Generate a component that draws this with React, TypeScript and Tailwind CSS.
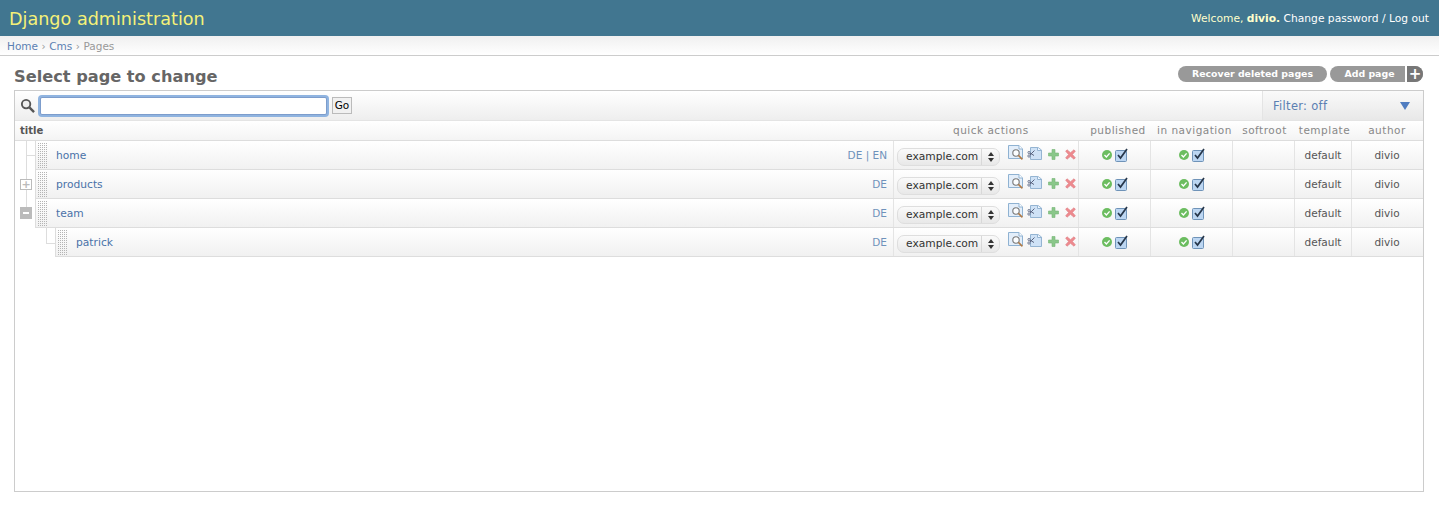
import React from "react";

const font = { fontFamily: '"DejaVu Sans", sans-serif' };

function Preview() {
  return (
    <svg width="16" height="15" viewBox="0 0 16 15" className="mb-[5px] shrink-0">
      <path d="M.5.5h10.500l3.500 3.500v9.500H.5z" fill="#e3eefa" stroke="#8fb2d2" />
      <path d="M11 .5v3.500h3.500" fill="#fff" stroke="#8fb2d2" />
      <circle cx="8" cy="8" r="3.200" fill="#fbfdff" stroke="#777777" strokeWidth="1.100" />
      <path d="M10.400 10.400l4 4" stroke="#b07a45" strokeWidth="1.500" />
    </svg>
  );
}
function Copy() {
  return (
    <svg width="15" height="13" viewBox="0 0 15 13" className="mb-[4px] shrink-0">
      <path d="M3.500.5h7.500l3.500 2.500v9.500h-11z" fill="#cfe2f6" stroke="#94b4d2" />
      <path d="M10.500.5v3h3.500" fill="#f4f9ff" stroke="#94b4d2" />
      <path d="M7.500 3.500L3 8M7 8.500L3 6" stroke="#5a6480" strokeWidth="1" fill="none" />
      <circle cx="2" cy="9" r="1.200" fill="#eef3fa" stroke="#5a6480" strokeWidth=".8" />
      <circle cx="2" cy="5.500" r="1.100" fill="#eef3fa" stroke="#5a6480" strokeWidth=".8" />
    </svg>
  );
}
function Plus() {
  return (
    <svg width="11" height="11" viewBox="0 0 11 11" className="mb-[1px] shrink-0">
      <path d="M4 .5h3v3.500h3.500v3H7v3.500H4V7H.5V4H4z" fill="#8ac78a" stroke="#76b576" strokeWidth=".6" />
    </svg>
  );
}
function Cross() {
  return (
    <svg width="11" height="11" viewBox="0 0 11 11" className="mb-[1px] shrink-0">
      <path d="M2 .8l3.500 2.900L9 .8l1.300 1.400L7.400 5.500l2.900 3.300L9 10.200 5.500 7.300 2 10.200.7 8.800l2.900-3.300L.7 2.200z" fill="#ee8a8e" stroke="#e08086" strokeWidth=".7" />
    </svg>
  );
}
function Status() {
  return (
    <div className="flex items-center gap-[3px] pl-[2px]">
      <svg width="10" height="10" viewBox="0 0 10 10">
        <circle cx="5" cy="5" r="5" fill="#6cbd60" />
        <path d="M2.500 5l1.900 1.900L7.600 3.400" fill="none" stroke="#fff" strokeWidth="1.400" />
      </svg>
      <svg width="14" height="14" viewBox="0 0 14 14">
        <rect x=".5" y="2.500" width="11" height="11" rx="1" fill="#bcd6f2" stroke="#6f93b8" />
        <path d="M3 7l2.500 3L12 1" fill="none" stroke="#26364a" strokeWidth="1.700" />
      </svg>
    </div>
  );
}
function Grip() {
  return (
    <div className="h-[25px] w-[10px] shrink-0 bg-[conic-gradient(#b4b4b4_25%,transparent_0)] bg-[length:2px_2px]" />
  );
}

const cols = [
  { w: "w-[72px]" },
  { w: "w-[82px]" },
  { w: "w-[62px]" },
  { w: "w-[57px]" },
  { w: "w-[72px]" },
];

const rows = [
  { name: "home", langs: "DE | EN", ml: "ml-[20px]" },
  { name: "products", langs: "DE", ml: "ml-[20px]" },
  { name: "team", langs: "DE", ml: "ml-[20px]" },
  { name: "patrick", langs: "DE", ml: "ml-[40px]" },
];

function Row({ r }: { r: (typeof rows)[number] }) {
  const nameW = r.name === "patrick" ? "w-[838px]" : "w-[858px]";
  return (
    <div className={`${r.ml} flex h-[29px] border-b border-l border-[#dddddd] bg-gradient-to-b from-white to-[#f1f1f1]`}>
      <div className={`${nameW} flex shrink-0 items-center border-r border-[#e4e4e4] pl-[1px] pr-[6px]`}>
        <Grip />
        <a className="ml-[9px] mt-[2px] text-[10.700px] text-[#4a72a8]">{r.name}</a>
        <span className="ml-auto mt-[2px] text-[10.500px] text-[#6f92bb]">{r.langs}</span>
      </div>
      <div className="flex w-[185px] shrink-0 items-center border-r border-[#e4e4e4] pl-[3px]">
        <div className="mt-[3px] flex h-[18px] w-[103px] shrink-0 items-center rounded-[7px] border border-[#dedede] bg-gradient-to-b from-[#fafafa] to-[#e8e8e8] pl-[8px] text-[10.700px] text-[#333333]">
          <span className="flex-1 pt-[1px]">example.com</span>
          <span className="flex h-full w-[18px] flex-col items-center justify-center gap-[2px] border-l border-[#d8d8d8]">
            <span className="h-0 w-0 border-x-[3px] border-b-[4px] border-x-transparent border-b-[#333333]" />
            <span className="h-0 w-0 border-x-[3px] border-t-[4px] border-x-transparent border-t-[#333333]" />
          </span>
        </div>
        <div className="ml-[8px] flex items-center">
          <Preview />
          <span className="ml-[3px] flex"><Copy /></span>
          <span className="ml-[6px] flex"><Plus /></span>
          <span className="ml-[6px] flex"><Cross /></span>
        </div>
      </div>
      <div className={`${cols[0].w} flex shrink-0 items-center justify-center border-r border-[#e4e4e4]`}><Status /></div>
      <div className={`${cols[1].w} flex shrink-0 items-center justify-center border-r border-[#e4e4e4]`}><Status /></div>
      <div className={`${cols[2].w} shrink-0 border-r border-[#e4e4e4]`} />
      <div className={`${cols[3].w} flex shrink-0 items-center justify-center border-r border-[#e4e4e4] pt-[2px] text-[10.500px] text-[#555555]`}>default</div>
      <div className={`${cols[4].w} flex shrink-0 items-center justify-center pr-[2px] pt-[2px] text-[10.500px] text-[#555555]`}>divio</div>
    </div>
  );
}

export default function App() {
  return (
    <div className="h-[516px] overflow-hidden bg-white" style={font}>
      <header className="flex h-[36px] items-center justify-between bg-[#417690] pl-[9px] pr-[10px] pt-[2px]">
        <h1 className="text-[17.600px] text-[#f5f178]">Django administration</h1>
        <div className="text-[10.700px] text-[#ffffcc]">
          Welcome, <b className="font-semibold">divio.</b> <span className="text-white">Change password / Log out</span>
        </div>
      </header>
      <nav className="flex h-[20px] items-center border-b border-[#cccccc] bg-gradient-to-b from-[#f0f0f0] to-white pl-[7px] pt-[2px] text-[10.500px] text-[#999999]">
        <a className="text-[#5b80b2]">Home</a>
        <span className="mx-[3.500px]">›</span>
        <a className="text-[#5b80b2]">Cms</a>
        <span className="mx-[3.500px]">›</span>
        <span>Pages</span>
      </nav>
      <main className="px-[14px] pr-[15px]">
        <div className="flex h-[34px] items-end justify-between pb-[2px]">
          <h2 className="text-[16.200px] font-bold leading-[22px] text-[#666666]">Select page to change</h2>
          <div className="mb-[6px] mr-[1px] flex gap-[3px] text-[9.400px] font-bold text-white">
            <span className="flex h-[16px] w-[149px] items-center justify-center rounded-full bg-[#999999]">Recover deleted pages</span>
            <span className="flex h-[16px] w-[93px] overflow-hidden rounded-full bg-[#999999]">
              <span className="flex flex-1 items-center justify-center pl-[4px]">Add page</span>
              <span className="flex w-[18px] items-center justify-center border-l-2 border-white bg-[#777777] text-[15px] font-bold leading-none">+</span>
            </span>
          </div>
        </div>
        <div className="h-[402px] border border-[#cccccc]">
          <div className="flex h-[30px] items-center border-b border-[#e4e4e4] bg-gradient-to-b from-white to-[#eeeeee]">
            <svg width="15" height="15" viewBox="0 0 16 16" className="mb-[1px] ml-[5px]">
              <circle cx="6.500" cy="6.500" r="4.500" fill="#eeeeee" stroke="#555555" strokeWidth="2" />
              <path d="M10 10l5 5" stroke="#555555" strokeWidth="2.500" />
            </svg>
            <input className="ml-[5px] h-[18px] w-[287px] rounded-[2px] border border-[#7d9dcc] bg-white shadow-[0_0_0_2px_#90b4e0] outline-none" />
            <button className="ml-[5px] h-[17px] w-[20px] border border-[#bbbbbb] bg-[#f1f1f1] text-[10.500px] text-black">Go</button>
            <div className="ml-auto flex h-full w-[161px] items-center justify-between border-l border-[#e4e4e4] bg-gradient-to-b from-[#fafafa] to-[#e8e8e8] pl-[10px] pr-[13px] text-[11.500px] tracking-[0.3px] text-[#5b80b2]">
              <span className="pt-[2px]">Filter: off</span>
              <span className="h-0 w-0 border-x-[5px] border-t-[8px] border-x-transparent border-t-[#4f7cc0]" />
            </div>
          </div>
          <div className="flex h-[20px] items-center whitespace-nowrap border-b border-[#dddddd] bg-gradient-to-b from-white to-[#f4f4f4] text-[10.500px] tracking-[0.5px] text-[#888888]">
            <span className="w-[878px] shrink-0 pl-[5px] text-[10px] font-bold tracking-normal text-[#555555]">title</span>
            <span className="w-[185px] shrink-0 pl-[60px]">quick actions</span>
            <span className={`${cols[0].w} shrink-0 pl-[8px] text-center`}>published</span>
            <span className={`${cols[1].w} shrink-0 pl-[7px]`}>in navigation</span>
            <span className={`${cols[2].w} shrink-0 pl-[3px] text-center`}>softroot</span>
            <span className={`${cols[3].w} shrink-0 pl-[4px] text-center`}>template</span>
            <span className={`${cols[4].w} shrink-0 text-center`}>author</span>
          </div>
          <div className="relative">
            {rows.map((r) => <Row key={r.name} r={r} />)}
            <span className="absolute left-[11px] top-0 h-[66px] w-px bg-[#dddddd]" />
            <span className="absolute left-[11px] top-[14px] h-px w-[9px] bg-[#dddddd]" />
            <span className="absolute left-[5px] top-[38px] flex h-[11px] w-[12px] items-center justify-center border border-[#bbbbbb] bg-white text-[11px] font-bold leading-none text-[#bbbbbb]">+</span>
            <span className="absolute left-[5px] top-[66px] flex h-[12px] w-[12px] items-center justify-center bg-[#bbbbbb]">
              <span className="h-[2px] w-[6px] bg-white" />
            </span>
            <span className="absolute left-[31px] top-[87px] h-[15px] w-px bg-[#dddddd]" />
            <span className="absolute left-[31px] top-[102px] h-px w-[9px] bg-[#dddddd]" />
          </div>
        </div>
      </main>
    </div>
  );
}
